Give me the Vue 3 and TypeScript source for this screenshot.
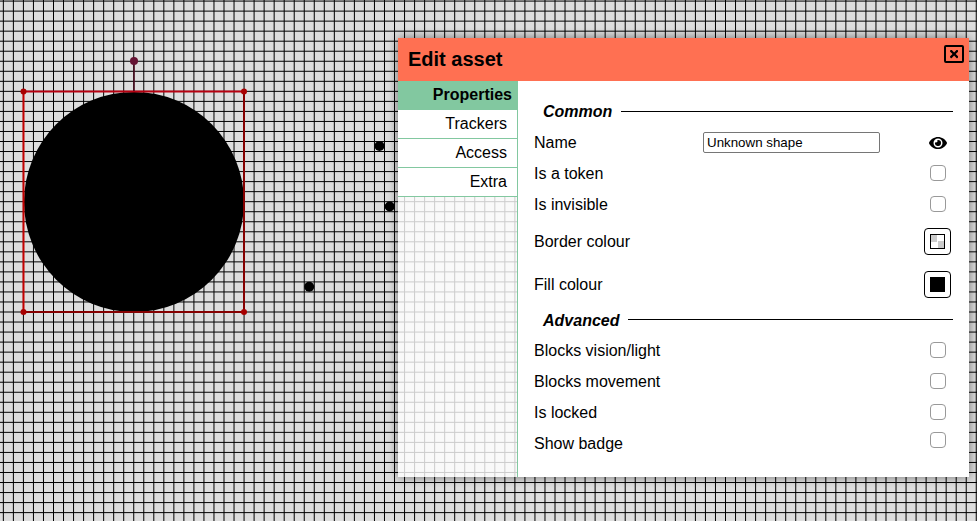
<script setup lang="ts">
import { ref } from 'vue'

const gridSize = 10.03
const vLines = Array.from({ length: 98 }, (_, i) => 3.35 + i * gridSize)
const hLines = Array.from({ length: 53 }, (_, i) => 1.08 + i * gridSize)

const corners = [
  [23.5, 91.5],
  [244, 91.5],
  [23.5, 312],
  [244, 312]
]
const points = [
  [379.5, 146],
  [389.7, 206.5],
  [309.2, 286.8]
]

const tabs = ['Properties', 'Trackers', 'Access', 'Extra']
const activeTab = ref('Properties')
const assetName = ref('Unknown shape')

const common = ref({ token: false, invisible: false })
const advanced = ref([
  { label: 'Blocks vision/light', checked: false },
  { label: 'Blocks movement', checked: false },
  { label: 'Is locked', checked: false },
  { label: 'Show badge', checked: false }
])
</script>

<template>
  <div class="stage">
    <svg class="board" width="977" height="521" viewBox="0 0 977 521">
      <rect width="977" height="521" fill="#dedede" />
      <line v-for="x in vLines" :key="'v' + x" :x1="x" :x2="x" y1="0" y2="521" stroke="#000" stroke-width="1" />
      <line v-for="y in hLines" :key="'h' + y" x1="0" x2="977" :y1="y" :y2="y" stroke="#000" stroke-width="1" />

      <circle cx="134" cy="202" r="110" fill="#000" />
      <circle v-for="p in points" :key="p[0]" :cx="p[0]" :cy="p[1]" r="5" fill="#000" />

      <line x1="23.5" y1="91.5" x2="244" y2="91.5" stroke="#b80010" stroke-width="2" />
      <line x1="23.5" y1="91.5" x2="23.5" y2="312" stroke="#c40000" stroke-width="2" />
      <line x1="244" y1="91.5" x2="244" y2="312" stroke="#860000" stroke-width="2" />
      <line x1="23.5" y1="312" x2="244" y2="312" stroke="#860000" stroke-width="2" />
      <line x1="134" y1="61" x2="134" y2="91" stroke="#4a0a1e" stroke-width="1.5" />
      <circle cx="134" cy="61" r="4" fill="#651333" />
      <circle v-for="c in corners" :key="c[0] + '-' + c[1]" :cx="c[0]" :cy="c[1]" r="3" fill="#a80000" />
    </svg>

    <div class="modal">
      <header class="modal-header">
        <h1>Edit asset</h1>
        <button class="close-btn" title="Close">
          <svg width="8.25" height="12" viewBox="0 0 352 512">
            <path
              d="M242.72 256l100.07-100.07c12.28-12.28 12.28-32.19 0-44.48l-22.24-22.24c-12.28-12.28-32.19-12.28-44.48 0L176 189.28 75.93 89.21c-12.28-12.28-32.19-12.28-44.48 0L9.21 111.45c-12.28 12.28-12.28 32.19 0 44.48L109.28 256 9.21 356.07c-12.28 12.28-12.28 32.19 0 44.48l22.24 22.24c12.28 12.28 32.2 12.28 44.48 0L176 322.72l100.07 100.07c12.28 12.28 32.2 12.28 44.48 0l22.24-22.24c12.28-12.28 12.28-32.19 0-44.48L242.72 256z"
            />
          </svg>
        </button>
      </header>

      <div class="modal-body">
        <nav class="tabs">
          <div
            v-for="t in tabs"
            :key="t"
            class="tab"
            :class="{ active: t === activeTab }"
            @click="activeTab = t"
          >
            {{ t }}
          </div>
        </nav>

        <section class="panel">
          <div class="legend">
            <span>Common</span>
            <i class="rule"></i>
          </div>
          <div class="row">
            <label class="name-label">Name</label>
            <input v-model="assetName" class="name-input" type="text" />
            <span class="control">
              <svg width="18" height="16" viewBox="0 0 576 512">
                <path
                  d="M572.52 241.4C518.29 135.59 410.93 64 288 64S57.68 135.64 3.48 241.41a32.35 32.35 0 0 0 0 29.19C57.71 376.41 165.07 448 288 448s230.32-71.64 284.52-177.41a32.35 32.35 0 0 0 0-29.19zM288 400a144 144 0 1 1 144-144 143.93 143.93 0 0 1-144 144zm0-240a95.31 95.31 0 0 0-25.31 3.79 47.85 47.85 0 0 1-66.9 66.9A95.78 95.78 0 1 0 288 160z"
                />
              </svg>
            </span>
          </div>
          <div class="row">
            <label>Is a token</label>
            <span class="control"><input v-model="common.token" class="check" type="checkbox" /></span>
          </div>
          <div class="row">
            <label>Is invisible</label>
            <span class="control"><input v-model="common.invisible" class="check" type="checkbox" /></span>
          </div>
          <div class="row tall">
            <label>Border colour</label>
            <span class="control">
              <button class="swatch-btn"><span class="swatch checker"></span></button>
            </span>
          </div>
          <div class="row tall">
            <label>Fill colour</label>
            <span class="control">
              <button class="swatch-btn"><span class="swatch filled"></span></button>
            </span>
          </div>

          <div class="legend second">
            <span>Advanced</span>
            <i class="rule"></i>
          </div>
          <div v-for="item in advanced" :key="item.label" class="row">
            <label>{{ item.label }}</label>
            <span class="control"><input v-model="item.checked" class="check" type="checkbox" /></span>
          </div>
        </section>
      </div>
    </div>
  </div>
</template>

<style scoped>
.stage {
  position: relative;
  width: 977px;
  height: 521px;
  overflow: hidden;
  font-family: "Liberation Sans", Arial, sans-serif;
  font-size: 16px;
  color: #000;
}

.board {
  display: block;
}

.modal {
  position: absolute;
  left: 398px;
  top: 38px;
  width: 571px;
  height: 439px;
  display: flex;
  flex-direction: column;
  box-shadow: 0 0 10px rgba(0, 0, 0, 0.5);
}

.modal-header {
  height: 43px;
  flex: none;
  display: flex;
  align-items: center;
  justify-content: space-between;
  padding: 0 5px 0 10px;
  background: #ff7052;
}

.modal-header h1 {
  margin: 0;
  font-size: 20px;
  font-weight: 700;
}

.close-btn {
  width: 20px;
  height: 18px;
  margin-top: -12px;
  padding: 0;
  display: flex;
  align-items: center;
  justify-content: center;
  background: transparent;
  border: 2px solid #000;
  border-radius: 2px;
}

.modal-body {
  flex: 1;
  display: flex;
  min-height: 0;
}

.tabs {
  width: 120px;
  flex: none;
  box-sizing: border-box;
  background: rgba(255, 255, 255, 0.8);
  border-right: 1px solid #82c8a0;
}

.tab {
  height: 29px;
  box-sizing: border-box;
  padding-right: 10px;
  line-height: 28px;
  text-align: right;
  background: #fff;
  border-bottom: 1px solid #82c8a0;
}

.tab.active {
  padding-right: 5px;
  font-weight: 700;
  background: #82c8a0;
}

.panel {
  flex: 1;
  padding: 16px 18px 0 16px;
  background: #fff;
}

.legend {
  height: 30px;
  display: flex;
  align-items: center;
  gap: 9px;
  margin-right: -2px;
  padding-left: 9px;
  font-weight: 700;
  font-style: italic;
}

.legend.second {
  height: 29px;
}

.rule {
  flex: 1;
  height: 1px;
  margin-bottom: 2px;
  background: #000;
}

.row {
  height: 31px;
  display: flex;
  align-items: center;
}

.row.tall {
  height: 43px;
}

.name-label {
  width: 169px;
}

.name-input {
  width: 177px;
  height: 21px;
  box-sizing: border-box;
  padding: 1px 3px;
  font-family: inherit;
  font-size: 13.33px;
  color: #000;
  border: 1px solid #767676;
  border-radius: 2px;
}

.control {
  width: 27px;
  margin-left: auto;
  display: flex;
  align-items: center;
  justify-content: center;
}

.control svg {
  display: block;
  margin-left: 1px;
}

.check {
  appearance: none;
  width: 16px;
  height: 16px;
  margin: 0 0 2px 1px;
  background: #fff;
  border: 1px solid #999;
  border-radius: 4px;
}

.row:last-child .check {
  margin-bottom: 7px;
}

.swatch-btn {
  width: 27px;
  height: 27px;
  padding: 0;
  display: flex;
  align-items: center;
  justify-content: center;
  background: #fff;
  border: 1px solid #000;
  border-radius: 4px;
}

.swatch {
  width: 15px;
  height: 15px;
  box-sizing: border-box;
  border: 1px solid #000;
}

.swatch.filled {
  background: #000;
}

.swatch.checker {
  background: conic-gradient(#fff 25%, #ccc 0 50%, #fff 0 75%, #ccc 0);
}
</style>

<style>
html,
body {
  margin: 0;
  overflow: hidden;
}
</style>
